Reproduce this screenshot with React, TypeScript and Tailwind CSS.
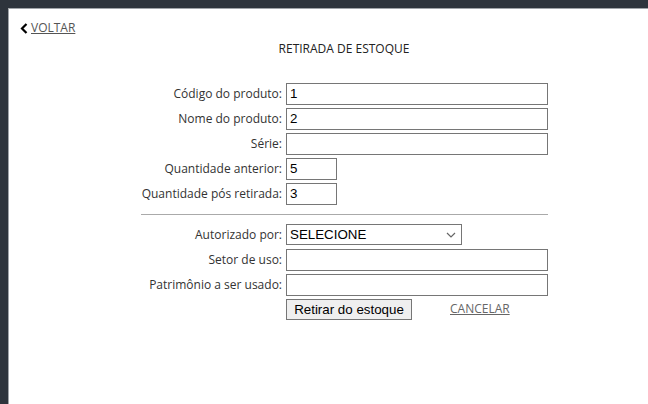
import React from 'react';

const inputCls =
  "h-[22px] border border-[#767676] bg-white px-[3px] font-['Liberation_Sans',Arial,sans-serif] text-[13.33px] text-black outline-none";

const Row: React.FC<{ label: string; children: React.ReactNode }> = ({ label, children }) => (
  <>
    <label className="text-right leading-[22px]">{label}</label>
    <div className="flex">{children}</div>
  </>
);

export default function App() {
  return (
    <div className="h-[404px] w-[648px] overflow-hidden bg-[#2e343c] pl-2 pt-2">
      <div className="h-full border-l border-t border-[#a0a4a8] bg-white font-['Open_Sans',sans-serif] text-[12px] text-[#333]">
        {/* voltar */}
        <div className="pl-[11px] pt-[11px] leading-4">
          <a href="#" className="inline-flex items-center gap-[3px] text-[#555] underline">
            <svg width="8" height="11" viewBox="0 0 8 11" className="text-black">
              <path d="M6.5 1 L2 5.5 L6.5 10" fill="none" stroke="currentColor" strokeWidth="2.2" />
            </svg>
            VOLTAR
          </a>
        </div>

        <div className="ml-[132px] w-[406px]">
          <div className="mt-[3px] text-center leading-4 text-[#222]">RETIRADA DE ESTOQUE</div>

          <div className="mt-[26px] grid grid-cols-[141px_auto] items-center gap-x-1 gap-y-[3px]">
            <Row label="Código do produto:">
              <input className={`${inputCls} w-[262px]`} defaultValue="1" />
            </Row>
            <Row label="Nome do produto:">
              <input className={`${inputCls} w-[262px]`} defaultValue="2" />
            </Row>
            <Row label="Série:">
              <input className={`${inputCls} w-[262px]`} defaultValue="" />
            </Row>
            <Row label="Quantidade anterior:">
              <input className={`${inputCls} w-[51px]`} defaultValue="5" />
            </Row>
            <Row label="Quantidade pós retirada:">
              <input className={`${inputCls} w-[51px]`} defaultValue="3" />
            </Row>

            <div className="col-span-2 mb-[6px] mt-[6px] border-t border-[#aaa]" />

            <Row label="Autorizado por:">
              <div className="relative flex h-[21px] w-[176px] items-center border border-[#767676] bg-white px-[3px] font-['Liberation_Sans',Arial,sans-serif] text-[13.33px] text-black">
                SELECIONE
                <svg width="10" height="6" viewBox="0 0 10 6" className="absolute right-[5px] top-[7px]">
                  <path d="M1 1 L5 5 L9 1" fill="none" stroke="#666" strokeWidth="1.2" />
                </svg>
              </div>
            </Row>
            <Row label="Setor de uso:">
              <input className={`${inputCls} w-[262px]`} defaultValue="" />
            </Row>
            <Row label="Patrimônio a ser usado:">
              <input className={`${inputCls} w-[262px]`} defaultValue="" />
            </Row>
            <div />
            <div className="flex items-center">
              <button className="h-[21px] w-[126px] border border-[#767676] bg-[#efefef] font-['Liberation_Sans',Arial,sans-serif] text-[13.33px] text-black">
                Retirar do estoque
              </button>
              <a href="#" className="ml-[38px] text-[#666] underline">CANCELAR</a>
            </div>
          </div>
        </div>
      </div>
    </div>
  );
}
